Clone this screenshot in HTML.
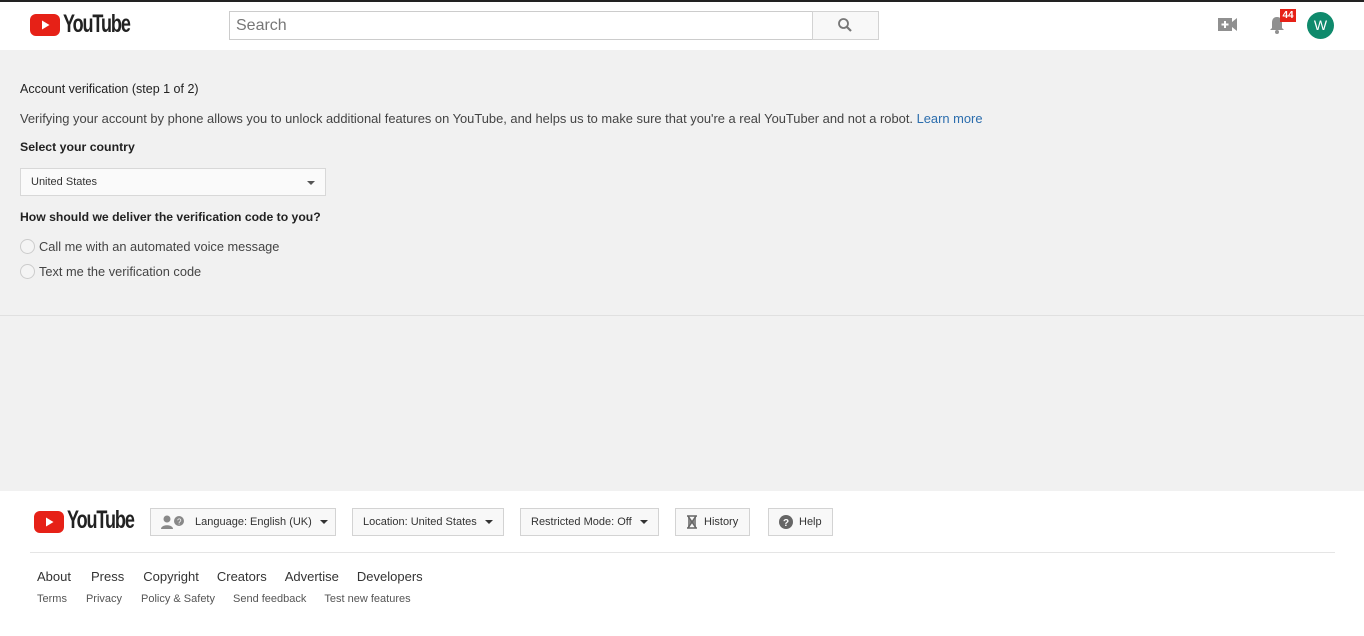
<!DOCTYPE html>
<html><head><meta charset="utf-8"><style>
*{box-sizing:border-box;margin:0;padding:0}
body{width:1364px;height:636px;overflow:hidden;font-family:"Liberation Sans",Arial,sans-serif;background:#fff;position:relative;color:#333}
.abs{position:absolute}
.top{left:0;top:0;width:1364px;height:2px;background:#222}
.hdr{left:0;top:2px;width:1364px;height:48px;background:#fff}
.main{left:0;top:50px;width:1364px;height:441px;background:#f1f1f1}
.sep{left:0;top:315px;width:1364px;height:1px;background:#e0e0e0}
.t{font-size:12px;white-space:nowrap}
.btn{position:absolute;top:508px;height:28px;border:1px solid #d3d3d3;background:#f8f8f8;font-size:11px;color:#333;display:flex;align-items:center;padding-left:10px}
.car{display:inline-block;width:0;height:0;border-left:4px solid transparent;border-right:4px solid transparent;border-top:4px solid #333;margin-left:8px}
.radio{position:absolute;left:20px;width:15px;height:15px;border:1px solid #ccc;border-radius:50%;background:#f4f4f4}
</style></head><body>
<div class="abs top"></div>
<div class="abs hdr"></div>
<svg class="abs" style="left:30px;top:14px" width="30" height="22" viewBox="0 0 30 22"><rect x="0" y="0" width="30" height="22" rx="6" fill="#e62117"/><path d="M12 6.5 L19.5 11 L12 15.5Z" fill="#fff"/></svg>
<div class="abs" style="left:63px;top:10px;font-size:25px;font-weight:bold;color:#222;letter-spacing:-1.5px;transform:scaleX(0.72);transform-origin:left">YouTube</div>
<div class="abs" style="left:229px;top:11px;width:584px;height:29px;border:1px solid #ccc;background:#fff;font-size:16px;color:#777;padding:5px 6px">Search</div>
<div class="abs" style="left:812px;top:11px;width:67px;height:29px;border:1px solid #d3d3d3;background:#f8f8f8"></div>
<svg class="abs" style="left:837px;top:17px" width="16" height="16" viewBox="0 0 16 16"><circle cx="6.5" cy="6.5" r="4.5" stroke="#777" stroke-width="1.8" fill="none"/><path d="M10 10 L14 14" stroke="#777" stroke-width="2.2"/></svg>
<svg class="abs" style="left:1218px;top:17px" width="20" height="15" viewBox="0 0 20 15"><rect x="0" y="1" width="14" height="13" fill="#909090"/><path d="M14 5 L19 1 V14 L14 10Z" fill="#909090"/><path d="M7 4V11M3.5 7.5H10.5" stroke="#fff" stroke-width="2"/></svg>
<svg class="abs" style="left:1268px;top:15px" width="18" height="20" viewBox="0 0 18 20"><path d="M9 2C5 2 4 5 4 8V13L2 15H16L14 13V8C14 5 13 2 9 2Z" fill="#909090"/><circle cx="9" cy="17" r="2" fill="#909090"/></svg>
<div class="abs" style="left:1280px;top:9px;width:16px;height:13px;background:#e62117;color:#fff;font-size:10px;font-weight:bold;text-align:center;line-height:13px">44</div>
<div class="abs" style="left:1307px;top:12px;width:27px;height:27px;border-radius:50%;background:#0f8a6c;color:#fff;font-size:14px;text-align:center;line-height:27px">W</div>

<div class="abs main"></div>
<div class="abs sep"></div>
<div class="abs t" style="left:20px;top:82px;font-size:12.5px;color:#222">Account verification (step 1 of 2)</div>
<div class="abs t" style="left:20px;top:111px;font-size:12.9px;color:#444">Verifying your account by phone allows you to unlock additional features on YouTube, and helps us to make sure that you're a real YouTuber and not a robot. <span style="color:#2b6dad">Learn more</span></div>
<div class="abs t" style="left:20px;top:140px;font-size:12.3px;color:#222;font-weight:bold">Select your country</div>
<div class="abs" style="left:20px;top:168px;width:306px;height:28px;border:1px solid #d8d8d8;background:#fafafa;font-size:11px;padding:7px 10px;color:#333">United States<span style="position:absolute;right:10px;top:12px;border-left:4px solid transparent;border-right:4px solid transparent;border-top:4px solid #555"></span></div>
<div class="abs t" style="left:20px;top:210px;font-size:12.2px;color:#222;font-weight:bold">How should we deliver the verification code to you?</div>
<div class="radio" style="top:239px"></div>
<div class="abs t" style="left:39px;top:239px;font-size:12.8px;color:#444">Call me with an automated voice message</div>
<div class="radio" style="top:264px"></div>
<div class="abs t" style="left:39px;top:264px;font-size:12.8px;color:#444">Text me the verification code</div>

<svg class="abs" style="left:34px;top:511px" width="30" height="22" viewBox="0 0 30 22"><rect x="0" y="0" width="30" height="22" rx="6" fill="#e62117"/><path d="M12 6.5 L19.5 11 L12 15.5Z" fill="#fff"/></svg>
<div class="abs" style="left:67px;top:506px;font-size:25px;font-weight:bold;color:#222;letter-spacing:-1.5px;transform:scaleX(0.72);transform-origin:left">YouTube</div>
<div class="btn" style="left:150px;width:186px"><svg width="26" height="14" viewBox="0 0 26 14"><circle cx="6" cy="4" r="3.5" fill="#888"/><path d="M0 14C0 9 12 9 12 14Z" fill="#888"/><circle cx="18" cy="6" r="5" fill="#888"/><text x="16" y="9.5" font-size="8" fill="#fff" font-family="Liberation Sans">?</text></svg><span style="margin-left:8px">Language: English (UK)</span><span class="car"></span></div>
<div class="btn" style="left:352px;width:152px">Location: United States<span class="car"></span></div>
<div class="btn" style="left:520px;width:139px">Restricted Mode: Off<span class="car"></span></div>
<div class="btn" style="left:675px;width:75px"><svg width="12" height="14" viewBox="0 0 12 14"><path d="M1 1H11M1 13H11M2 1L6 7L2 13M10 1L6 7L10 13" stroke="#666" stroke-width="1.5" fill="#888"/></svg><span style="margin-left:6px">History</span></div>
<div class="btn" style="left:768px;width:65px"><svg width="14" height="14" viewBox="0 0 14 14"><circle cx="7" cy="7" r="7" fill="#666"/><text x="4" y="11" font-size="10" font-weight="bold" fill="#fff" font-family="Liberation Sans">?</text></svg><span style="margin-left:6px">Help</span></div>
<div class="abs" style="left:30px;top:552px;width:1305px;height:1px;background:#e5e5e5"></div>
<div class="abs t" style="left:37px;top:569px;font-size:13px;color:#333"><span>About</span><span style="margin-left:20px">Press</span><span style="margin-left:19px">Copyright</span><span style="margin-left:18px">Creators</span><span style="margin-left:18px">Advertise</span><span style="margin-left:18px">Developers</span></div>
<div class="abs t" style="left:37px;top:593px;font-size:11px;color:#555"><span>Terms</span><span style="margin-left:19px">Privacy</span><span style="margin-left:19px">Policy &amp; Safety</span><span style="margin-left:18px">Send feedback</span><span style="margin-left:18px">Test new features</span></div>
</body></html>
